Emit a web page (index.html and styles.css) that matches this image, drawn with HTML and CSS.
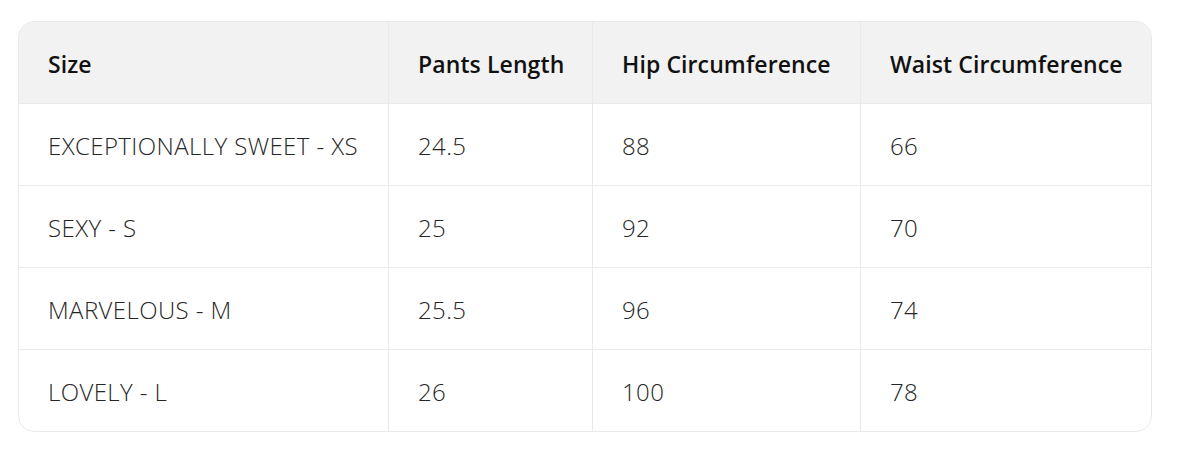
FILE: index.html
```html
<!DOCTYPE html>
<html lang="en">
<head>
<meta charset="utf-8">
<title>Size Chart</title>
<link rel="stylesheet" href="styles.css">
</head>
<body>
<div class="table-wrap">
  <table class="size-table">
    <thead>
      <tr>
        <th class="c1">Size</th>
        <th class="c2">Pants Length</th>
        <th class="c3">Hip Circumference</th>
        <th class="c4">Waist Circumference</th>
      </tr>
    </thead>
    <tbody>
      <tr><td>EXCEPTIONALLY SWEET - XS</td><td>24.5</td><td>88</td><td>66</td></tr>
      <tr><td>SEXY - S</td><td>25</td><td>92</td><td>70</td></tr>
      <tr><td>MARVELOUS - M</td><td>25.5</td><td>96</td><td>74</td></tr>
      <tr><td>LOVELY - L</td><td>26</td><td>100</td><td>78</td></tr>
    </tbody>
  </table>
</div>
</body>
</html>
```
FILE: styles.css
```css
html, body {
  margin: 0;
  padding: 0;
  background: #ffffff;
}
body {
  font-family: "Open Sans", "Noto Sans", sans-serif;
}
.table-wrap {
  box-sizing: border-box;
  width: 1134px;
  margin: 21px 0 0 18px;
  border: 1px solid #e9e9e9;
  border-radius: 16px;
  overflow: hidden;
}
.size-table {
  width: 100%;
  table-layout: fixed;
  border-collapse: separate;
  border-spacing: 0;
}
.size-table th,
.size-table td {
  box-sizing: border-box;
  height: 82px;
  padding: 2px 0 0 29px;
  text-align: left;
  vertical-align: middle;
  border-left: 1px solid #e9e9e9;
  border-top: 1px solid #ebebeb;
  white-space: nowrap;
}
.size-table th:first-child,
.size-table td:first-child {
  border-left: none;
}
.size-table thead th {
  border-top: none;
  height: 81px;
  background: #f2f2f2;
  font-size: 23px;
  font-weight: 600;
  letter-spacing: 0.1px;
  color: #111111;
}
.size-table td {
  font-size: 24px;
  font-weight: 300;
  letter-spacing: 0.4px;
  color: #262626;
}
.c1 { width: 369px; }
.c2 { width: 204px; }
.c3 { width: 268px; }
.c4 { width: 291px; }
```
